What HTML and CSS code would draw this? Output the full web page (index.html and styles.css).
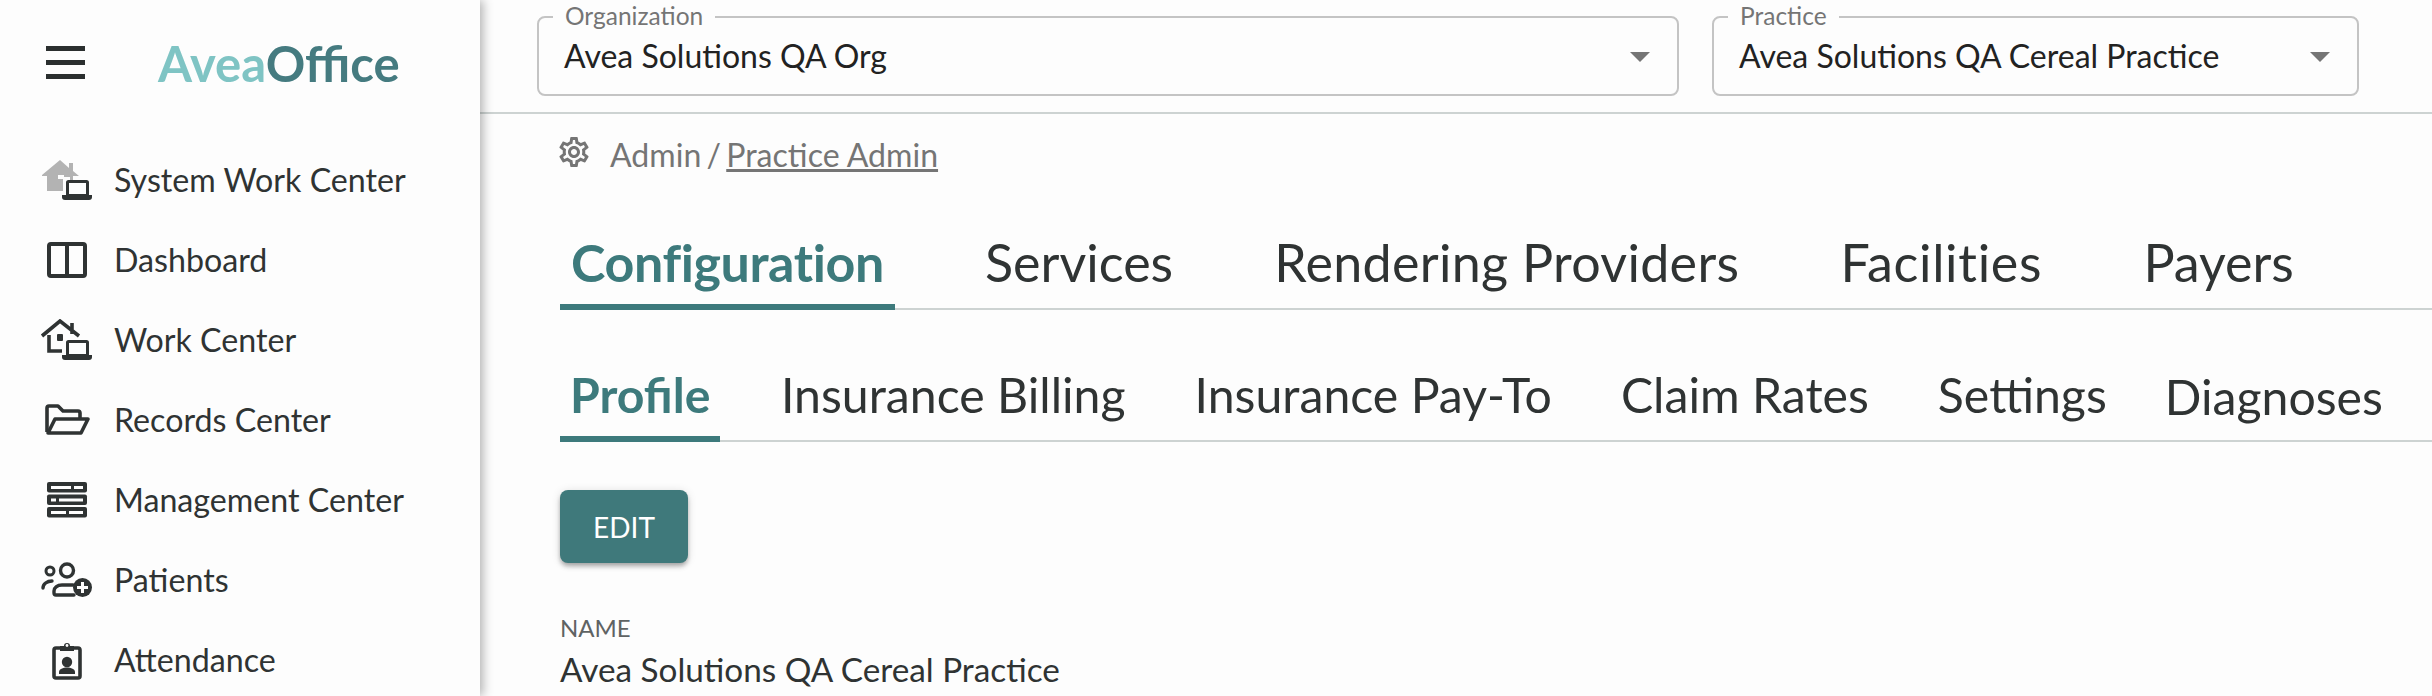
FILE: index.html
```html
<!DOCTYPE html>
<html lang="en">
<head>
    <meta charset="UTF-8">
    <meta name="viewport" content="width=device-width, initial-scale=1.0">
    <title>AveaOffice</title>
    <link rel="stylesheet" href="styles.css">
</head>
<body>
    <div class="sidebar">
        <div class="brand">
            <svg class="menu-icon" viewBox="0 0 40 34"><path d="M0 0h39v5H0zM0 14h39v5H0zM0 28h39v5H0z" fill="#2b2f2f"/></svg>
            <div class="logo"><span class="logo-light">Avea</span><span class="logo-dark">Office</span></div>
        </div>
        <div class="nav">
            <div class="nav-item">
                <svg class="nav-icon" viewBox="0 0 54 44">
                    <path d="M2 16 20 1l9 8V4h4v8l6 5h-6v15H7V17H2z" fill="#b3b3b3"/>
                    <path d="M18 16h6v4h-6zM23 18h7v18h-7z" fill="#fdfdfd"/>
                    <rect x="27.500" y="22.500" width="20" height="14" rx="1" fill="#fdfdfd" stroke="#2f3333" stroke-width="3"/>
                    <path d="M22 36h30v2a3 3 0 0 1-3 3H25a3 3 0 0 1-3-3z" fill="#2f3333"/>
                </svg>
                <span>System Work Center</span>
            </div>
            <div class="nav-item">
                <svg class="nav-icon" viewBox="0 0 54 44">
                    <rect x="9" y="5" width="36" height="32" rx="2" fill="none" stroke="#2f3333" stroke-width="4"/>
                    <path d="M27 5v32" stroke="#2f3333" stroke-width="4"/>
                </svg>
                <span>Dashboard</span>
            </div>
            <div class="nav-item">
                <svg class="nav-icon" viewBox="0 0 54 44">
                    <path d="M22 32H9V16M2 17 20 2l19 15M32 4v11" fill="none" stroke="#2f3333" stroke-width="3.600"/>
                    <rect x="17" y="15" width="6" height="7" rx="1" fill="#2f3333"/>
                    <rect x="27.500" y="22.500" width="20" height="14" rx="1" fill="#fdfdfd" stroke="#2f3333" stroke-width="3"/>
                    <path d="M22 36h30v2a3 3 0 0 1-3 3H25a3 3 0 0 1-3-3z" fill="#2f3333"/>
                </svg>
                <span>Work Center</span>
            </div>
            <div class="nav-item">
                <svg class="nav-icon" viewBox="0 0 54 44">
                    <path d="M7 33V9a2 2 0 0 1 2-2h9l5 5h15a2 2 0 0 1 2 2v6" fill="none" stroke="#2f3333" stroke-width="3.600" stroke-linejoin="round"/>
                    <path d="M15 20h33l-7 14H8z" fill="none" stroke="#2f3333" stroke-width="3.600" stroke-linejoin="round"/>
                </svg>
                <span>Records Center</span>
            </div>
            <div class="nav-item">
                <svg class="nav-icon" viewBox="0 0 54 44">
                    <rect x="7" y="3" width="40" height="10.500" rx="2" fill="#2f3333"/>
                    <rect x="7" y="15.500" width="40" height="10.500" rx="2" fill="#2f3333"/>
                    <rect x="7" y="28" width="40" height="10.500" rx="2" fill="#2f3333"/>
                    <path d="M11 7h20v3H11zM34 7h9v3h-9zM11 19.500h5v3h-5zM19 19.500h24v3H19zM11 32h15v3H11zM29 32h14v3H29z" fill="#fdfdfd"/>
                </svg>
                <span>Management Center</span>
            </div>
            <div class="nav-item">
                <svg class="nav-icon" viewBox="0 0 54 44">
                    <circle cx="10" cy="12" r="4" fill="none" stroke="#2f3333" stroke-width="3"/>
                    <circle cx="27" cy="11.500" r="6.500" fill="none" stroke="#2f3333" stroke-width="3.400"/>
                    <path d="M3 29c0-4 4-7 9-7M33 26H22c-5 0-8 3-8 6v2a2 2 0 0 0 2 2h18" fill="none" stroke="#2f3333" stroke-width="3.400" stroke-linecap="round"/>
                    <circle cx="42.500" cy="28.500" r="9.500" fill="#2f3333"/>
                    <path d="M37 27h4V23h3v4h4v3h-4v4h-3v-4h-4z" fill="#fdfdfd"/>
                </svg>
                <span>Patients</span>
            </div>
            <div class="nav-item">
                <svg class="nav-icon" viewBox="0 0 54 44">
                    <rect x="14" y="9" width="26" height="30" rx="2" fill="none" stroke="#2f3333" stroke-width="3.600"/>
                    <path d="M20 7h4a3 3 0 0 1 6 0h4v5H20z" fill="#2f3333"/>
                    <circle cx="27" cy="6.500" r="1.400" fill="#fdfdfd"/>
                    <circle cx="27" cy="23" r="5.200" fill="#2f3333"/>
                    <path d="M19 35v-2c0-3 4-4.500 8-4.500s8 1.500 8 4.500v2z" fill="#2f3333"/>
                </svg>
                <span>Attendance</span>
            </div>
        </div>
    </div>
    <div class="main">
        <div class="topbar">
            <fieldset class="select select-org">
                <legend>Organization</legend>
                <div class="select-row"><span>Avea Solutions QA Org</span><i class="arrow"></i></div>
            </fieldset>
            <fieldset class="select select-practice">
                <legend>Practice</legend>
                <div class="select-row"><span>Avea Solutions QA Cereal Practice</span><i class="arrow"></i></div>
            </fieldset>
        </div>
        <div class="content">
            <div class="crumbs">
                <svg class="gear" viewBox="0 0 24 24"><path fill="#757575" d="M19.430 12.980c.04-.32.07-.64.07-.98 0-.34-.03-.66-.07-.98l2.110-1.650c.19-.15.24-.42.12-.64l-2-3.460c-.09-.16-.26-.25-.44-.25-.06 0-.12.01-.17.03l-2.490 1c-.52-.4-1.080-.73-1.690-.98l-.38-2.650C14.460 2.180 14.250 2 14 2h-4c-.25 0-.46.18-.49.42l-.38 2.650c-.61.25-1.170.59-1.690.98l-2.490-1c-.06-.02-.12-.03-.18-.03-.17 0-.34.09-.43.25l-2 3.460c-.13.22-.07.49.12.64l2.110 1.650c-.04.32-.07.65-.07.98 0 .33.03.66.07.98l-2.110 1.650c-.19.15-.24.42-.12.64l2 3.460c.09.16.26.25.44.25.06 0 .12-.01.17-.03l2.490-1c.52.4 1.080.73 1.690.98l.38 2.650c.03.24.24.42.49.42h4c.25 0 .46-.18.49-.42l.38-2.650c.61-.25 1.170-.59 1.690-.98l2.490 1c.06.02.12.03.18.03.17 0 .34-.09.43-.25l2-3.460c.12-.22.07-.49-.12-.64l-2.110-1.650zm-1.980-1.710c.04.31.05.52.05.73 0 .21-.02.43-.05.73l-.14 1.130.89.7 1.080.84-.7 1.210-1.270-.51-1.040-.42-.9.68c-.43.32-.84.56-1.250.73l-1.060.43-.16 1.130-.2 1.350h-1.400l-.19-1.350-.16-1.130-1.060-.43c-.43-.18-.83-.41-1.230-.71l-.91-.7-1.060.43-1.270.51-.7-1.210 1.080-.84.89-.7-.14-1.130c-.03-.31-.05-.54-.05-.74s.02-.43.05-.73l.14-1.130-.89-.7-1.080-.84.7-1.210 1.270.51 1.040.42.9-.68c.43-.32.84-.56 1.250-.73l1.060-.43.16-1.130.2-1.350h1.390l.19 1.350.16 1.130 1.060.43c.43.18.83.41 1.230.71l.91.7 1.060-.43 1.270-.51.7 1.210-1.070.85-.89.7.14 1.130zM12 8c-2.210 0-4 1.790-4 4s1.790 4 4 4 4-1.790 4-4-1.790-4-4-4zm0 6c-1.100 0-2-.9-2-2s.9-2 2-2 2 .9 2 2-.9 2-2 2z"/></svg>
                <span>Admin / <a href="#">Practice Admin</a></span>
            </div>
            <div class="tabs">
                <div class="tab active">Configuration</div>
                <div class="tab">Services</div>
                <div class="tab tab-rendering">Rendering Providers</div>
                <div class="tab tab-facilities">Facilities</div>
                <div class="tab">Payers</div>
            </div>
            <div class="subtabs">
                <div class="subtab active">Profile</div>
                <div class="subtab">Insurance Billing</div>
                <div class="subtab">Insurance Pay-To</div>
                <div class="subtab">Claim Rates</div>
                <div class="subtab">Settings</div>
                <div class="subtab subtab-last">Diagnoses</div>
            </div>
            <button class="edit-btn">EDIT</button>
            <div class="field-label">NAME</div>
            <div class="field-value">Avea Solutions QA Cereal Practice</div>
        </div>
    </div>
</body>
</html>
```

FILE: styles.css
```css
body {
    font-family: 'Lato', sans-serif;
    background-color: #fdfdfd;
    color: #2f3333;
    margin: 0;
    display: flex;
    height: 696px;
    overflow: hidden;
}
.sidebar {
    position: relative;
    z-index: 1;
    width: 480px;
    flex-shrink: 0;
    box-shadow: 3px 0 10px rgba(0,0,0,0.3);
    background-color: #fdfdfd;
}
.brand {
    display: flex;
    align-items: center;
    height: 141px;
    padding-left: 46px;
}
.menu-icon {
    width: 40px;
    height: 34px;
    margin-top: -16px;
}
.logo {
    font-size: 49px;
    font-weight: 700;
    margin-left: 72px;
    margin-top: -15px;
}
.logo-light {
    color: #7fc4c4;
}
.logo-dark {
    color: #457b80;
}
.nav-item {
    display: flex;
    align-items: center;
    height: 80px;
    padding-left: 40px;
    font-size: 32.200px;
}
.nav-item span {
    margin-top: -3px;
}
.nav-icon {
    width: 54px;
    height: 44px;
    margin-right: 20px;
}
.main {
    flex: 1;
    min-width: 0;
}
.topbar {
    display: flex;
    gap: 33px;
    height: 111px;
    padding: 1px 73px 0 57px;
    border-bottom: 2px solid #cdd3d2;
}
.select {
    margin: 0;
    border: 2px solid #c4c4c4;
    border-radius: 8px;
    padding: 0 27px 0 25px;
    height: 95px;
    box-sizing: border-box;
}
.select-org {
    flex: 1;
}
.select-practice {
    width: 647px;
    flex-shrink: 0;
}
.select legend {
    font-size: 24.500px;
    line-height: 30px;
    color: #757575;
    padding: 0 12px 2px;
    margin-left: -11px;
}
.select-row {
    display: flex;
    align-items: center;
    justify-content: space-between;
    font-size: 32px;
    color: #222;
    height: 48px;
}
.select-row span {
    margin-top: -3px;
}
.arrow {
    width: 0;
    height: 0;
    border-left: 10px solid transparent;
    border-right: 10px solid transparent;
    border-top: 10px solid #757575;
}
.content {
    padding-left: 80px;
}
.crumbs {
    display: flex;
    align-items: center;
    height: 80px;
    margin-left: -4px;
    font-size: 32.100px;
    color: #757575;
    word-spacing: -3px;
}
.gear {
    width: 36px;
    height: 36px;
    margin-right: 18px;
    margin-top: -4px;
}
.crumbs a {
    color: #757575;
    word-spacing: 0;
}
.tabs {
    display: flex;
    gap: 79.200px;
    margin-top: 4px;
    height: 112px;
    box-sizing: border-box;
    border-bottom: 2px solid #cdd3d2;
}
.tab {
    padding: 0 11px;
    font-size: 52px;
    height: 112px;
    box-sizing: border-box;
    line-height: 128px;
    color: #2f3333;
}
.tab.active {
    color: #3d7a7c;
    font-weight: 700;
    letter-spacing: -0.4px;
    border-bottom: 6px solid #3d7a7c;
}
.tab-rendering {
    letter-spacing: 0.3px;
}
.tab-facilities {
    letter-spacing: 0.7px;
}
.subtabs {
    display: flex;
    gap: 47px;
    height: 132px;
    box-sizing: border-box;
    border-bottom: 2px solid #cdd3d2;
}
.subtab {
    padding: 0 11px;
    font-size: 48.200px;
    height: 132px;
    box-sizing: border-box;
    line-height: 168px;
}
.subtab.active {
    color: #3d7a7c;
    font-weight: 700;
    padding: 0 9.500px 0 10px;
    margin-right: 3px;
    border-bottom: 6px solid #3d7a7c;
}
.subtab-last {
    margin-left: -11px;
    padding-top: 2px;
}
.edit-btn {
    display: block;
    width: 128px;
    height: 73px;
    margin-top: 48px;
    border: none;
    border-radius: 8px;
    background-color: #3f797b;
    color: white;
    font-family: 'Lato', sans-serif;
    font-size: 28px;
    box-shadow: 0 3px 4px -1px rgba(0,0,0,0.2), 0 4px 5px rgba(0,0,0,0.14), 0 1px 10px rgba(0,0,0,0.12);
}
.field-label {
    margin-top: 50px;
    font-size: 24px;
    line-height: 30px;
    color: #5f6363;
}
.field-value {
    margin-top: 6px;
    font-size: 33.300px;
    line-height: 40px;
}
```
